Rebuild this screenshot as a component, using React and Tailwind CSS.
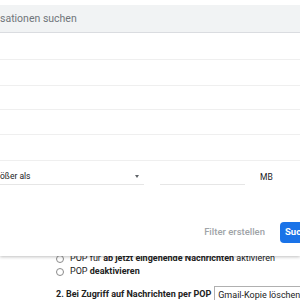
import React from "react";

function Radio() {
  return <span className="inline-block w-[8px] h-[8px] rounded-full border border-[#8a8a8a] bg-white shrink-0" />;
}

export default function App() {
  return (
    <div className="relative w-[300px] h-[300px] overflow-hidden bg-white" style={{ fontFamily: "Roboto, 'Liberation Sans', sans-serif" }}>
      {/* page content behind */}
      <div className="pl-[56px] pt-[252px] text-[9px] text-[#222222] leading-none">
        <div className="flex items-center gap-[6px] h-[13px] whitespace-nowrap">
          <Radio />
          <span>POP für <b>ab jetzt eingehende Nachrichten</b> aktivieren</span>
        </div>
        <div className="flex items-center gap-[6px] h-[13px] whitespace-nowrap">
          <Radio />
          <span>POP <b>deaktivieren</b></span>
        </div>
        <div className="flex items-start gap-[3px] mt-[8px] whitespace-nowrap">
          <b className="pt-[4px] shrink-0">2. Bei Zugriff auf Nachrichten per POP</b>
          <div className="shrink-0 border border-[#b0b0b0] h-[18px] pl-[3px] pr-[8px] pt-[4px]">Gmail-Kopie löschen</div>
        </div>
      </div>

      {/* search panel overlay */}
      <div className="absolute left-0 top-0 w-[300px] h-[256px] bg-white shadow-[0_1px_3px_rgba(0,0,0,0.25)] flex flex-col">
        <div className="mt-[5px] h-[28px] bg-[#f1f3f4] border-b border-[#dadce0] flex items-center text-[10.5px] text-[#70757a] whitespace-nowrap">
          sationen suchen
        </div>
        <div className="h-[27px] border-b border-[#efefef]" />
        <div className="h-[26px] border-b border-[#efefef]" />
        <div className="h-[24px] border-b border-[#efefef]" />
        <div className="h-[25px] border-b border-[#efefef]" />
        <div className="h-[26px] border-b border-[#efefef]" />
        <div className="flex items-end h-[24px] text-[8.5px] text-[#202124]">
          <div className="w-[144px] h-[16px] border-b border-[#e6e6e6] flex items-center justify-between pr-[5px]">
            <span className="whitespace-nowrap">ößer als</span>
            <span className="w-0 h-0 border-l-[2.5px] border-r-[2.5px] border-t-[3px] border-l-transparent border-r-transparent border-t-[#5f6368]" />
          </div>
          <div className="ml-[16px] w-[85px] h-[16px] border-b border-[#e6e6e6]" />
          <div className="ml-[15px] h-[16px] flex items-center">MB</div>
        </div>
        <div className="flex items-center justify-end mt-[37px] h-[21px]">
          <span className="text-[9.5px] font-medium text-[#a0a4a8] mr-[15px] whitespace-nowrap">Filter erstellen</span>
          <div className="w-[20px] h-[21px] bg-[#1a73e8] rounded-l-[4px] flex items-center pl-[5px] text-[9.5px] font-bold text-white overflow-hidden whitespace-nowrap">Suchen</div>
        </div>
      </div>
    </div>
  );
}
